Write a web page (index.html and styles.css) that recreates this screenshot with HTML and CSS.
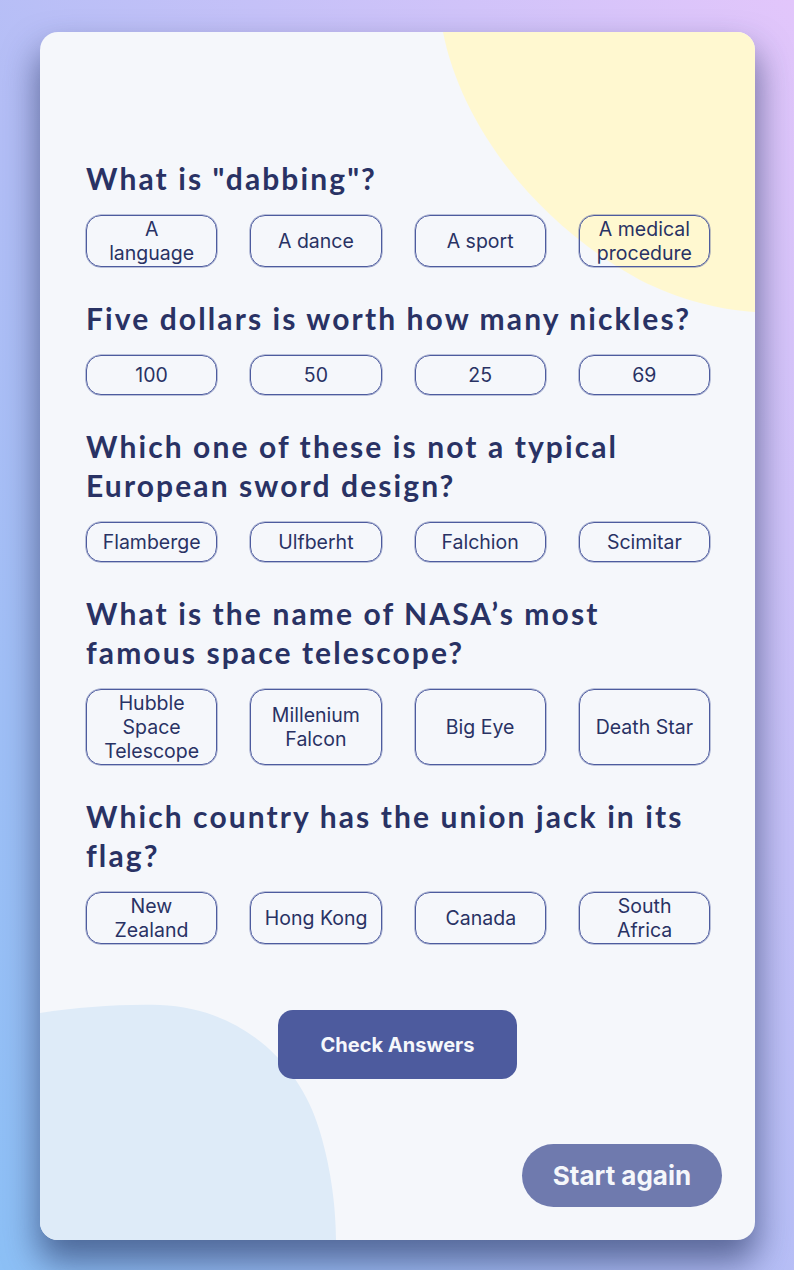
FILE: index.html
```html
<!DOCTYPE html>
<html lang="en">
<head>
<meta charset="utf-8">
<title>Quizzical</title>
<link rel="stylesheet" href="styles.css">
</head>
<body>
<main class="card">
  <svg class="blob blob-yellow" viewBox="0 0 312 282" width="312" height="282" aria-hidden="true">
    <path d="M0,0 C17,88 87,188 197,248 C237,268 277,278 312,280 L312,0 Z" fill="#fff8d0"/>
  </svg>
  <svg class="blob blob-blue" viewBox="0 0 300 236" width="300" height="236" aria-hidden="true">
    <path d="M0,9 C40,3 80,0 120,1 C200,4 260,58 280,128 C292,168 296,208 296,236 L0,236 Z" fill="#deebf8"/>
  </svg>

  <section class="quiz">
    <div class="question">
      <h2 class="q-title">What is "dabbing"?</h2>
      <div class="answers">
        <button class="answer">A language</button>
        <button class="answer">A dance</button>
        <button class="answer">A sport</button>
        <button class="answer">A medical procedure</button>
      </div>
    </div>
    <div class="question">
      <h2 class="q-title">Five dollars is worth how many nickles?</h2>
      <div class="answers">
        <button class="answer">100</button>
        <button class="answer">50</button>
        <button class="answer">25</button>
        <button class="answer">69</button>
      </div>
    </div>
    <div class="question">
      <h2 class="q-title">Which one of these is not a typical European sword design?</h2>
      <div class="answers">
        <button class="answer">Flamberge</button>
        <button class="answer">Ulfberht</button>
        <button class="answer">Falchion</button>
        <button class="answer">Scimitar</button>
      </div>
    </div>
    <div class="question">
      <h2 class="q-title">What is the name of NASA’s most famous space telescope?</h2>
      <div class="answers">
        <button class="answer">Hubble Space Telescope</button>
        <button class="answer">Millenium Falcon</button>
        <button class="answer">Big Eye</button>
        <button class="answer">Death Star</button>
      </div>
    </div>
    <div class="question">
      <h2 class="q-title">Which country has the union jack in its flag?</h2>
      <div class="answers">
        <button class="answer">New Zealand</button>
        <button class="answer">Hong&nbsp;Kong</button>
        <button class="answer">Canada</button>
        <button class="answer">South Africa</button>
      </div>
    </div>
  </section>

  <button class="check-btn">Check Answers</button>
  <button class="restart-btn">Start again</button>
</main>
</body>
</html>
```
FILE: styles.css
```css
* { box-sizing: border-box; }

html, body { height: 100%; }

body {
  margin: 0;
  padding: 32px 39px 30px 40px;
  background: linear-gradient(to top right, #8cc0f6 0%, #b3bef6 45%, #e2c6fb 100%);
  font-family: Inter, "Liberation Sans", sans-serif;
}

.card {
  position: relative;
  overflow: hidden;
  width: 715px;
  height: 1208px;
  background: #f5f7fb;
  border-radius: 18px;
  box-shadow: 0 20px 34px 2px rgba(30, 45, 90, 0.6);
  padding: 127px 33px 33px;
  display: flex;
  flex-direction: column;
}

.blob {
  position: absolute;
  display: block;
}
.blob-yellow { top: 0; right: 0; }
.blob-blue { bottom: 0; left: 0; }

.quiz {
  position: relative;
  padding: 0 12px 0 13px;
  display: flex;
  flex-direction: column;
  gap: 32px;
}

.q-title {
  margin: 0 0 17px;
  font-family: Lato, "Noto Sans", sans-serif;
  font-weight: 700;
  font-size: 30px;
  line-height: 39px;
  letter-spacing: 2.1px;
  color: #293264;
}

.answers {
  display: grid;
  grid-template-columns: repeat(4, 1fr);
  gap: 33px;
}

.answer {
  min-height: 40px;
  padding: 1px 14px;
  border: 1px solid #4d5b9e;
  box-shadow: 0 0 0 0.5px rgba(77, 91, 158, 0.7);
  border-radius: 15px;
  background: transparent;
  font-family: Inter, sans-serif;
  font-size: 19.5px;
  line-height: 24px;
  color: #293264;
  display: flex;
  align-items: center;
  justify-content: center;
  text-align: center;
}

.check-btn {
  position: relative;
  align-self: center;
  margin-top: 66px;
  width: 239px;
  height: 69px;
  border: none;
  border-radius: 15px;
  background: #4d5b9e;
  color: #f5f7fb;
  font-family: Inter, sans-serif;
  font-weight: 700;
  font-size: 20px;
}

.restart-btn {
  position: relative;
  align-self: flex-end;
  margin-top: auto;
  width: 200px;
  height: 63px;
  border: none;
  border-radius: 32px;
  background: #6f7aae;
  color: #f5f7fb;
  font-family: Inter, sans-serif;
  font-weight: 700;
  font-size: 26px;
}
```
